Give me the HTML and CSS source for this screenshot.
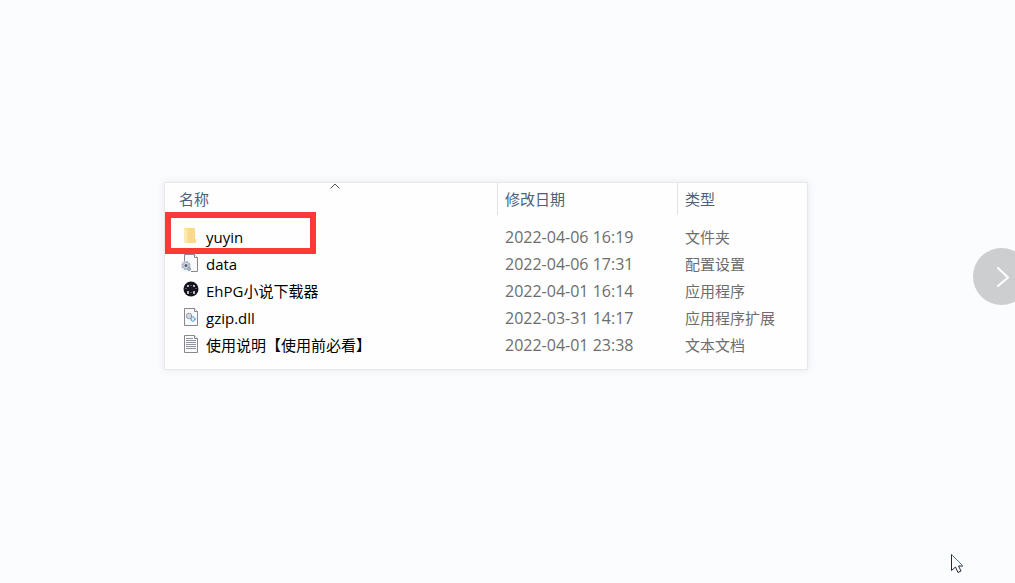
FILE: index.html
```
<!DOCTYPE html>
<html lang="zh-CN">
    <head>
        <meta charset="utf-8">
        <meta name="viewport" content="width=device-width, initial-scale=1">
        <title>yuyin</title>
        <link rel="stylesheet" href="styles.css">
    </head>
    <body>
        <main class="viewer">
            <div class="card">
                <table class="files">
                    <thead>
                        <tr>
                            <th class="col-name">名称
                                <svg class="sort" width="10" height="6" viewBox="0 0 10 6"><path d="M.5 5.500 5 1l4.500 4.500" fill="none" stroke="#555" /></svg>
                            </th>
                            <th class="col-date">修改日期</th>
                            <th class="col-type">类型</th>
                        </tr>
                    </thead>
                    <tbody>
                        <tr>
                            <td class="name">
                                <div class="file">
                                    <svg class="icon" width="18" height="20" viewBox="0 0 18 20">
                                        <path d="M3 2h11v11h1v4H5l-2-1z" fill="#fbdf95"/>
                                        <path d="M8 2h6v11h1v4H7z" fill="#f9d98a"/>
                                        <path d="M3 2l3 2v14l-3-2z" fill="#ffe9b3"/>
                                    </svg>
                                    yuyin
                                </div>
                                <span class="mark"></span>
                            </td>
                            <td>2022-04-06 16:19</td>
                            <td class="type">文件夹</td>
                        </tr>
                        <tr>
                            <td class="name">
                                <div class="file">
                                    <svg class="icon" width="18" height="20" viewBox="0 0 18 20">
                                        <path d="M3.500 1.500h10l3 3v14h-13z" fill="#f8f9fc" stroke="#8b868d"/>
                                        <path d="M13.500 1.500v3h3" fill="#fff" stroke="#8b868d"/>
                                        <path d="M0 8h7v3h3v8H0z" fill="#f3f6fa"/>
                                        <circle cx="5" cy="12.500" r="3.500" fill="#d7e0eb" stroke="#a3adbb" stroke-width="2" stroke-dasharray="2 .7"/>
                                        <circle cx="5" cy="12.500" r="1.500" fill="#555b70"/>
                                        <circle cx="8" cy="16" r="1.500" fill="#b9c6d6" stroke="#8d99ac"/>
                                    </svg>
                                    data
                                </div>
                            </td>
                            <td>2022-04-06 17:31</td>
                            <td class="type">配置设置</td>
                        </tr>
                        <tr>
                            <td class="name">
                                <div class="file">
                                    <svg class="icon" width="18" height="20" viewBox="0 0 18 20">
                                        <circle cx="10" cy="9" r="7.500" fill="#17131f"/>
                                        <path d="M6 5h2v2H6zM12 5h2v2h-2zM6 11h2v3H6zM12 11h2v3h-2z" fill="#b5b3bc"/>
                                        <path d="M9 5h2v1H9zM4 8h2v1H4zM14 8h2v1h-2zM9 12h2v1H9z" fill="#55505f"/>
                                    </svg>
                                    EhPG小说下载器
                                </div>
                            </td>
                            <td>2022-04-01 16:14</td>
                            <td class="type">应用程序</td>
                        </tr>
                        <tr>
                            <td class="name">
                                <div class="file">
                                    <svg class="icon" width="18" height="20" viewBox="0 0 18 20">
                                        <path d="M3.500 1.500h10l3 3v14h-13z" fill="#f7f9fc" stroke="#8b868d"/>
                                        <path d="M13.500 1.500v3h3" fill="#fff" stroke="#8b868d"/>
                                        <circle cx="8" cy="9" r="2.500" fill="#fff" stroke="#8c919b" stroke-width="1.500" stroke-dasharray="1.500 .5"/>
                                        <circle cx="8" cy="9" r="1" fill="none" stroke="#a5a9b1" stroke-width=".5"/>
                                        <circle cx="12" cy="12" r="2" fill="#e6f3fd" stroke="#68a5d0" stroke-width="1.500" stroke-dasharray="1.500 .5"/>
                                    </svg>
                                    gzip.dll
                                </div>
                            </td>
                            <td>2022-03-31 14:17</td>
                            <td class="type">应用程序扩展</td>
                        </tr>
                        <tr>
                            <td class="name">
                                <div class="file">
                                    <svg class="icon" width="18" height="20" viewBox="0 0 18 20">
                                        <path d="M3.500 1.500h10l3 3v14h-13z" fill="#fafafc" stroke="#8b868d"/>
                                        <path d="M13.500 1.500v3h3" fill="#fff" stroke="#8b868d"/>
                                        <path d="M5 4.500h7M5 6.500h10M5 8.500h10M5 10.500h10M5 12.500h10M5 14.500h10" stroke="#8e959f"/>
                                    </svg>
                                    使用说明【使用前必看】
                                </div>
                            </td>
                            <td>2022-04-01 23:38</td>
                            <td class="type">文本文档</td>
                        </tr>
                    </tbody>
                </table>
            </div>
            <button class="next" type="button" aria-label="下一张">
                <svg width="12" height="22" viewBox="0 0 12 22"><path d="M1 2l10 9.500L1 20" fill="none" stroke="#fff" stroke-width="2" stroke-linecap="round" stroke-linejoin="round"/></svg>
            </button>
            <svg class="pointer" width="13" height="20" viewBox="0 0 13 20">
                <path d="M.5.5v16l4-3.500 2.500 5.500 3-1.500-2.500-5h4.500z" fill="#fff" stroke="#272239"/>
                <path d="M.5.5 12 12" stroke="#52749e"/>
            </svg>
        </main>
    </body>
</html>
```
FILE: styles.css
```
body{
    margin: 0;
    background: #fbfcfe;
    font-family: "Open Sans", "Noto Sans CJK SC", sans-serif;
    font-size: 15px;
}
.viewer{
    position: relative;
    box-sizing: border-box;
    min-height: 100vh;
    padding: 182px 207px 0 164px;
    overflow: hidden;
}
.card{
    background: #fefefe;
    border: 1px solid #e8e8ea;
    box-shadow: 0 0 8px #e6e8ef;
    padding-bottom: 10px;
}
.files{
    width: 100%;
    table-layout: fixed;
    border-collapse: collapse;
    line-height: 27px;
}
.files th{
    position: relative;
    height: 41px;
    padding: 3px 0 0 8px;
    box-sizing: border-box;
    color: #4c607a;
    font-weight: normal;
    text-align: left;
    vertical-align: top;
    background: linear-gradient(#e2e2e4, #e2e2e4) no-repeat 0 0 / 1px 32px;
}
.files .col-name{
    width: 332px;
    padding-left: 14px;
    background: none;
}
.col-date{
    width: 180px;
}
.sort{
    position: absolute;
    left: 165px;
    top: 0;
}
.files td{
    height: 27px;
    padding: 0 0 0 8px;
    color: #6d6d6d;
    font-size: 16px;
    white-space: nowrap;
}
.files .name{
    position: relative;
    padding-left: 16px;
    color: #000;
    font-size: 15px;
}
.files .type{
    font-size: 15px;
}
.file{
    display: flex;
    gap: 7px;
}
.icon{
    margin-top: 2px;
}
/* red frame round the folder */
.mark{
    position: absolute;
    left: 0;
    top: -12px;
    box-sizing: border-box;
    width: 151px;
    height: 42px;
    border: 6px solid #fb3939;
}
.next{
    position: absolute;
    right: -15px;
    top: 248px;
    width: 57px;
    height: 57px;
    padding: 0 0 0 3px;
    border: 0;
    border-radius: 50%;
    background: #cdced0;
}
.next svg{
    display: block;
    margin: 0 auto;
}
.pointer{
    position: absolute;
    right: 51px;
    top: 554px;
}
```
